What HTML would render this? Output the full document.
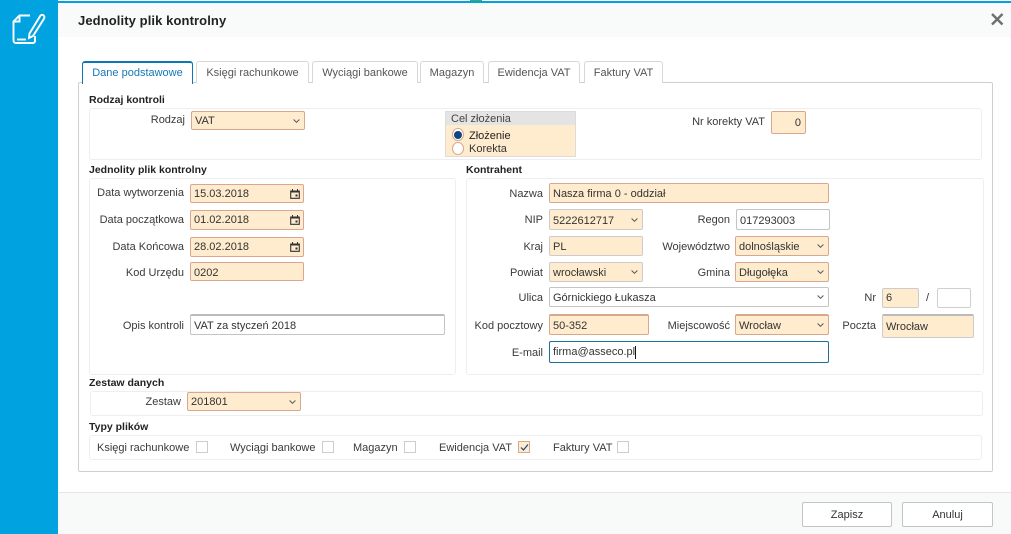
<!DOCTYPE html>
<html lang="pl"><head><meta charset="utf-8"><title>Jednolity plik kontrolny</title>
<style>
*{box-sizing:border-box}
html,body{margin:0;padding:0;width:1011px;height:534px;overflow:hidden;background:#fff;font-family:"Liberation Sans",sans-serif;font-size:11px;color:#333}
div,span.a,svg.a{position:absolute}
.t{white-space:nowrap;line-height:14px}
.l{white-space:nowrap;line-height:14px;text-align:right;color:#3a3a3a;margin-top:1px}
.h{white-space:nowrap;line-height:14px;font-weight:bold;color:#222;font-size:10.5px;margin-top:1px}
.tab{top:61px;height:22px;border:1px solid #d8d8d8;border-bottom:0;border-radius:3px 3px 0 0;background:#fff;color:#555;text-align:center;line-height:23px;white-space:nowrap}
.box{border:1px solid #eeeeee;border-radius:3px;background:#fff}
.f{border:1px solid #d9a78e;border-radius:2px;background:#ffeccf;padding-left:3px;white-space:nowrap;color:#333;display:flex;align-items:center}
.p{padding-top:2px}
.w{background:#fff;border-color:#c4c4c4}
.g{border-color:#cbcbcb}
.arr{position:absolute;right:4px;top:50%;margin-top:-2px;width:7px;height:4px}
.cal{position:absolute;right:3px;top:50%;margin-top:-5px;width:10px;height:10px}
.c{width:12px;height:12px;border:1px solid #cccccc;background:#fff;top:441px}
.btn{top:502px;height:25px;border:1px solid #c4c4c4;border-radius:2px;background:#fff;text-align:center;line-height:25px;color:#333}
</style></head><body>
<svg width="0" height="0" style="position:absolute"><defs>
<symbol id="ar" viewBox="0 0 7 4"><path d="M.6.5 3.500 3.300 6.400.5" fill="none" stroke="#555" stroke-width="1"/></symbol>
<symbol id="ca" viewBox="0 0 10 10"><path d="M.7 2h8.600v7.300H.7z" fill="none" stroke="#333" stroke-width="1.100"/><path d="M.7 1.500h8.600V3.500H.7zM2 0h1v2H2zM7 0h1v2H7z" fill="#333"/><path d="M5.500 5.500h2v2h-2z" fill="#333"/></symbol>
</defs></svg>

<div style="left:0;top:1px;width:1011px;height:2px;background:#00a3e0"></div>
<div style="left:470px;top:0;width:12px;height:1px;background:#3fae49"></div>
<div style="left:0;top:0;width:58px;height:534px;background:#00a3e0"></div>
<div style="left:58px;top:3px;width:953px;height:34px;background:#f8fbfa"></div>
<svg class="a" style="left:10px;top:12px" width="36" height="34" viewBox="0 0 36 34" fill="none" stroke="#fff" stroke-width="1.900">
<path d="M20 3.500H9.500L3.500 9.500v19a2.500 2.500 0 0 0 2.500 2.500H23a2 2 0 0 0 2-2V24"/><path d="M9.500 3.500v6h-6"/><path d="M7 27.500h9"/><path d="M30.500 3.500c1-1 2.500-.7 3.200 0s1 2.200.3 3.200L23 24l-4 2 .5-4.500z"/></svg>
<div class="t" style="left:78px;top:14px;font-size:13px;font-weight:bold;color:#222;letter-spacing:.1px">Jednolity plik kontrolny</div>
<svg class="a" style="left:990px;top:12px" width="14" height="14" viewBox="0 0 14 14"><path d="M2 2l10.500 10.500M12.500 2 2 12.500" stroke="#6f6f6f" stroke-width="2.400"/></svg>

<div style="left:78px;top:82px;width:915px;height:390px;border:1px solid #cfcfcf;border-radius:2px"></div>
<div class="tab" style="left:82px;width:111px;height:23px;border-color:#0a78b8;border-top:2px solid #0a78b8;border-bottom:0;color:#1479b8;line-height:21px">Dane podstawowe</div>
<div class="tab" style="left:196px;width:113px">Księgi rachunkowe</div>
<div class="tab" style="left:312px;width:106px">Wyciągi bankowe</div>
<div class="tab" style="left:420px;width:64px">Magazyn</div>
<div class="tab" style="left:488px;width:92px">Ewidencja VAT</div>
<div class="tab" style="left:584px;width:79px">Faktury VAT</div>

<div class="h" style="left:89px;top:92px">Rodzaj kontroli</div>
<div class="box" style="left:89px;top:108px;width:893px;height:52px"></div>
<div class="l" style="left:100px;top:112px;width:85px">Rodzaj</div>
<div class="f" style="left:191px;top:111px;width:114px;height:19px">VAT<svg class="arr"><use href="#ar"/></svg></div>
<div style="left:445px;top:111px;width:131px;height:46px;background:#ffeccf;border:1px solid #dcdcdc"></div>
<div style="left:446px;top:112px;width:129px;height:13px;background:#e4e4e4"></div>
<div class="t" style="left:451px;top:112px;color:#444">Cel złożenia</div>
<div style="left:452px;top:128px;width:12px;height:13px;border-radius:50%;background:#fff;border:1px solid #d9a78e"></div>
<div style="left:454px;top:131px;width:8px;height:8px;border-radius:50%;background:#0f4780"></div>
<div style="left:452px;top:142px;width:12px;height:13px;border-radius:50%;background:#fff;border:1px solid #d9a78e"></div>
<div class="t" style="left:469px;top:129px;color:#222">Złożenie</div>
<div class="t" style="left:469px;top:142px;color:#333">Korekta</div>
<div class="l" style="left:660px;top:114px;width:105px">Nr korekty VAT</div>
<div class="f" style="left:771px;top:111px;width:35px;height:23px;justify-content:flex-end;padding-right:4px">0</div>

<div class="h" style="left:89px;top:162px">Jednolity plik kontrolny</div>
<div class="box" style="left:89px;top:178px;width:367px;height:197px"></div>
<div class="l" style="left:80px;top:185px;width:104px">Data wytworzenia</div>
<div class="f" style="left:190px;top:184px;width:114px;height:19px">15.03.2018<svg class="cal"><use href="#ca"/></svg></div>
<div class="l" style="left:80px;top:212px;width:104px">Data początkowa</div>
<div class="f" style="left:190px;top:210px;width:114px;height:20px">01.02.2018<svg class="cal"><use href="#ca"/></svg></div>
<div class="l" style="left:80px;top:239px;width:104px">Data Końcowa</div>
<div class="f" style="left:190px;top:237px;width:114px;height:20px">28.02.2018<svg class="cal"><use href="#ca"/></svg></div>
<div class="l" style="left:80px;top:265px;width:104px">Kod Urzędu</div>
<div class="f p" style="left:190px;top:262px;width:114px;height:19px">0202</div>
<div class="l" style="left:80px;top:318px;width:104px">Opis kontroli</div>
<div class="f w p" style="left:190px;top:314px;width:255px;height:21px;border-top:2px solid #bbb">VAT za styczeń 2018</div>

<div class="h" style="left:466px;top:162px">Kontrahent</div>
<div class="box" style="left:466px;top:178px;width:518px;height:197px"></div>
<div class="l" style="left:460px;top:186px;width:83px">Nazwa</div>
<div class="f p" style="left:549px;top:183px;width:280px;height:20px">Nasza firma 0 - oddział</div>
<div class="l" style="left:460px;top:212px;width:83px">NIP</div>
<div class="f g p" style="left:549px;top:209px;width:94px;height:21px">5222612717<svg class="arr"><use href="#ar"/></svg></div>
<div class="l" style="left:650px;top:212px;width:80px">Regon</div>
<div class="f w p" style="left:736px;top:209px;width:94px;height:21px">017293003</div>
<div class="l" style="left:460px;top:239px;width:83px">Kraj</div>
<div class="f g p" style="left:549px;top:236px;width:94px;height:20px">PL</div>
<div class="l" style="left:640px;top:239px;width:90px">Województwo</div>
<div class="f p" style="left:735px;top:236px;width:94px;height:20px">dolnośląskie<svg class="arr"><use href="#ar"/></svg></div>
<div class="l" style="left:460px;top:265px;width:83px">Powiat</div>
<div class="f g p" style="left:549px;top:262px;width:94px;height:20px">wrocławski<svg class="arr"><use href="#ar"/></svg></div>
<div class="l" style="left:650px;top:265px;width:80px">Gmina</div>
<div class="f p" style="left:735px;top:262px;width:94px;height:20px">Długołęka<svg class="arr"><use href="#ar"/></svg></div>
<div class="l" style="left:460px;top:290px;width:83px">Ulica</div>
<div class="f w p" style="left:549px;top:287px;width:280px;height:20px">Górnickiego Łukasza<svg class="arr"><use href="#ar"/></svg></div>
<div class="l" style="left:460px;top:318px;width:83px">Kod pocztowy</div>
<div class="f p" style="left:549px;top:314px;width:100px;height:21px;border-top:2px solid #d9a78e">50-352</div>
<div class="l" style="left:650px;top:318px;width:80px">Miejscowość</div>
<div class="f p" style="left:735px;top:314px;width:94px;height:21px;border-top:2px solid #d9a78e">Wrocław<svg class="arr"><use href="#ar"/></svg></div>
<div class="l" style="left:460px;top:345px;width:83px">E-mail</div>
<div class="f w" style="left:549px;top:341px;width:280px;height:22px;border-color:#1a6f9f">firma@asseco.pl<span style="display:inline-block;width:1px;height:13px;background:#111"></span></div>
<div class="l" style="left:850px;top:290px;width:26px">Nr</div>
<div class="f g" style="left:882px;top:288px;width:37px;height:20px">6</div>
<div class="t" style="left:926px;top:291px">/</div>
<div class="f w" style="left:937px;top:288px;width:34px;height:20px;border-color:#cfcfcf"></div>
<div class="l" style="left:830px;top:318px;width:46px">Poczta</div>
<div class="f g" style="left:882px;top:314px;width:92px;height:24px;border-top:2px solid #bbb">Wrocław</div>

<div class="h" style="left:89px;top:375px">Zestaw danych</div>
<div class="box" style="left:90px;top:391px;width:893px;height:25px"></div>
<div class="l" style="left:120px;top:394px;width:61px">Zestaw</div>
<div class="f" style="left:187px;top:392px;width:114px;height:19px">201801<svg class="arr"><use href="#ar"/></svg></div>

<div class="h" style="left:89px;top:419px">Typy plików</div>
<div class="box" style="left:89px;top:435px;width:893px;height:25px"></div>
<div class="t" style="left:97px;top:441px;color:#3a3a3a">Księgi rachunkowe</div><div class="c" style="left:196px"></div>
<div class="t" style="left:230px;top:441px;color:#3a3a3a">Wyciągi bankowe</div><div class="c" style="left:322px"></div>
<div class="t" style="left:353px;top:441px;color:#3a3a3a">Magazyn</div><div class="c" style="left:404px"></div>
<div class="t" style="left:439px;top:441px;color:#3a3a3a">Ewidencja VAT</div>
<div class="c" style="left:518px;background:#ffeccf;border-color:#d9a78e"><svg class="a" style="left:1px;top:1px" width="9" height="9" viewBox="0 0 9 9"><path d="M1 4.500 3.500 7 8 1.500" fill="none" stroke="#0f4780" stroke-width="1.200"/></svg></div>
<div class="t" style="left:553px;top:441px;color:#3a3a3a">Faktury VAT</div><div class="c" style="left:617px"></div>

<div style="left:58px;top:492px;width:953px;height:42px;background:#f7faf9;border-top:1px solid #e6e6e6"></div>
<div class="btn" style="left:802px;width:90px">Zapisz</div>
<div class="btn" style="left:902px;width:91px">Anuluj</div>
</body></html>
